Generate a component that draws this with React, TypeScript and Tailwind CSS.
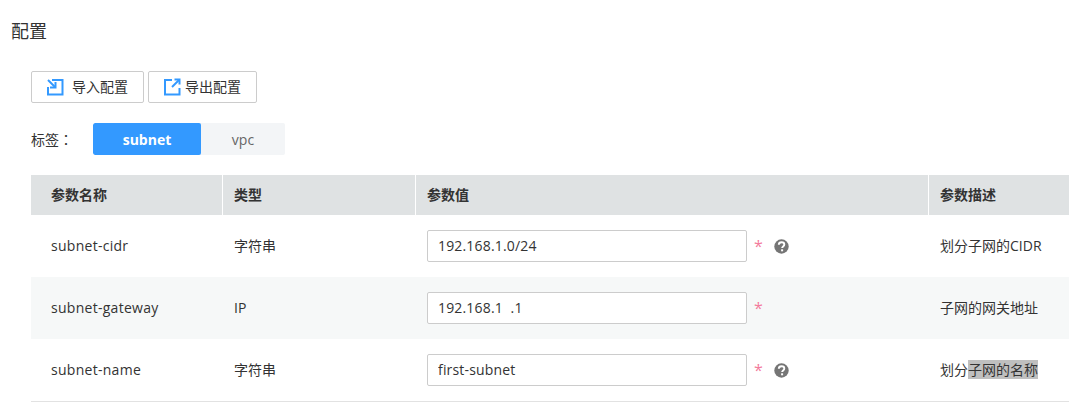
import React from "react";

const Help = () => (
  <svg width="15" height="15" viewBox="0 0 15 15" className="block">
    <circle cx="7.5" cy="7.5" r="7.2" fill="#757575" />
    <path d="M4.800 5.800c0-1.500 1.200-2.500 2.800-2.500s2.700 1 2.700 2.300c0 1.900-2.200 1.900-2.200 3.500" fill="none" stroke="#fff" strokeWidth="1.900" />
    <rect x="7.100" y="10.300" width="2" height="2" fill="#fff" />
  </svg>
);

const ImportIcon = () => (
  <svg width="18" height="18" viewBox="0 0 18 18" fill="none" stroke="#3399ff" strokeWidth="2" className="block">
    <path d="M6 2h10.500v14.500H2V9" />
    <path d="M2 2l7 7" />
    <path d="M9.500 4v5.500H4" />
  </svg>
);

const ExportIcon = () => (
  <svg width="18" height="18" viewBox="0 0 18 18" fill="none" stroke="#3399ff" strokeWidth="2" className="block">
    <path d="M9 2H2v14.500h14.500V10" />
    <path d="M9 9l7-7" />
    <path d="M11.500 1.500h5v5" />
  </svg>
);

const rows = [
  { name: "subnet-cidr", type: "字符串", value: "192.168.1.0/24", help: true, desc: "划分子网的CIDR" },
  { name: "subnet-gateway", type: "IP", value: "192.168.1  .1", help: false, desc: "子网的网关地址" },
  { name: "subnet-name", type: "字符串", value: "first-subnet", help: true, desc: "" },
];

export default function App() {
  return (
    <div className="h-[416px] w-[1069px] overflow-hidden bg-white font-['Open_Sans','Noto_Sans_CJK_SC',sans-serif] text-[14px] text-[#333]">
      <h1 className="pl-[11px] pt-[19px] text-[18px] font-normal leading-[24px]">配置</h1>

      <div className="pl-[31px]">
        <div className="mt-[28px] flex gap-[4px]">
          <button className="flex h-[32px] w-[113px] items-center rounded-[2px] border border-[#ccc] pl-[14px]">
            <ImportIcon />
            <span className="ml-[8px] leading-none">导入配置</span>
          </button>
          <button className="flex h-[32px] w-[109px] items-center rounded-[2px] border border-[#ccc] pl-[14px]">
            <ExportIcon />
            <span className="ml-[4px] leading-none">导出配置</span>
          </button>
        </div>

        <div className="mt-[20px] flex h-[32px] items-center">
          <span className="w-[62px]">
            标签<span className="font-['Noto_Sans_CJK_TC',sans-serif]">：</span>
          </span>
          <div className="flex h-[32px] w-[192px] overflow-hidden rounded-[2px] bg-[#f3f5f7]">
            <div className="flex w-[108px] items-center justify-center rounded-[2px] bg-[#3399ff] font-bold text-white">subnet</div>
            <div className="flex w-[84px] items-center justify-center text-[#666]">vpc</div>
          </div>
        </div>

        <div className="mt-[20px] grid h-[40px] grid-cols-[191px_192px_512px_140px] gap-x-px bg-white font-bold">
          {["参数名称", "类型", "参数值", "参数描述"].map((h, i) => (
            <div key={h} className={`flex items-center bg-[#dfe2e3] pb-[2px] ${i === 0 ? "pl-[20px]" : "pl-[11px]"}`}>{h}</div>
          ))}
        </div>

        {rows.map((r, i) => (
          <div
            key={r.name}
            className={`grid grid-cols-[191px_192px_512px_140px] gap-x-px ${i === 1 ? "bg-[#f6f8f8]" : ""} ${i === 2 ? "h-[63px] border-b border-[#e2e2e2]" : "h-[62px]"}`}
          >
            <div className="flex items-center whitespace-pre pb-[2px] pl-[20px] tracking-[0.28px]">{r.name}</div>
            <div className="flex items-center pb-[2px] pl-[11px]">{r.type}</div>
            <div className="flex items-center pl-[11px]">
              <input
                readOnly
                value={r.value}
                className="h-[32px] w-[320px] rounded-[2px] border border-[#ccc] bg-white px-[10px] pb-[1px] tracking-[0.17px] text-[#333] outline-none"
              />
              <span className="ml-[7px] w-[20px] text-[16px] leading-none text-[#f37b9c]">*</span>
              {r.help && <Help />}
            </div>
            <div className="flex items-center pb-[2px] pl-[11px]">
              {r.desc ? r.desc : (
                <span>
                  划分<span className="bg-[#bfbfbf]">子网的名称</span>
                </span>
              )}
            </div>
          </div>
        ))}
      </div>
    </div>
  );
}
